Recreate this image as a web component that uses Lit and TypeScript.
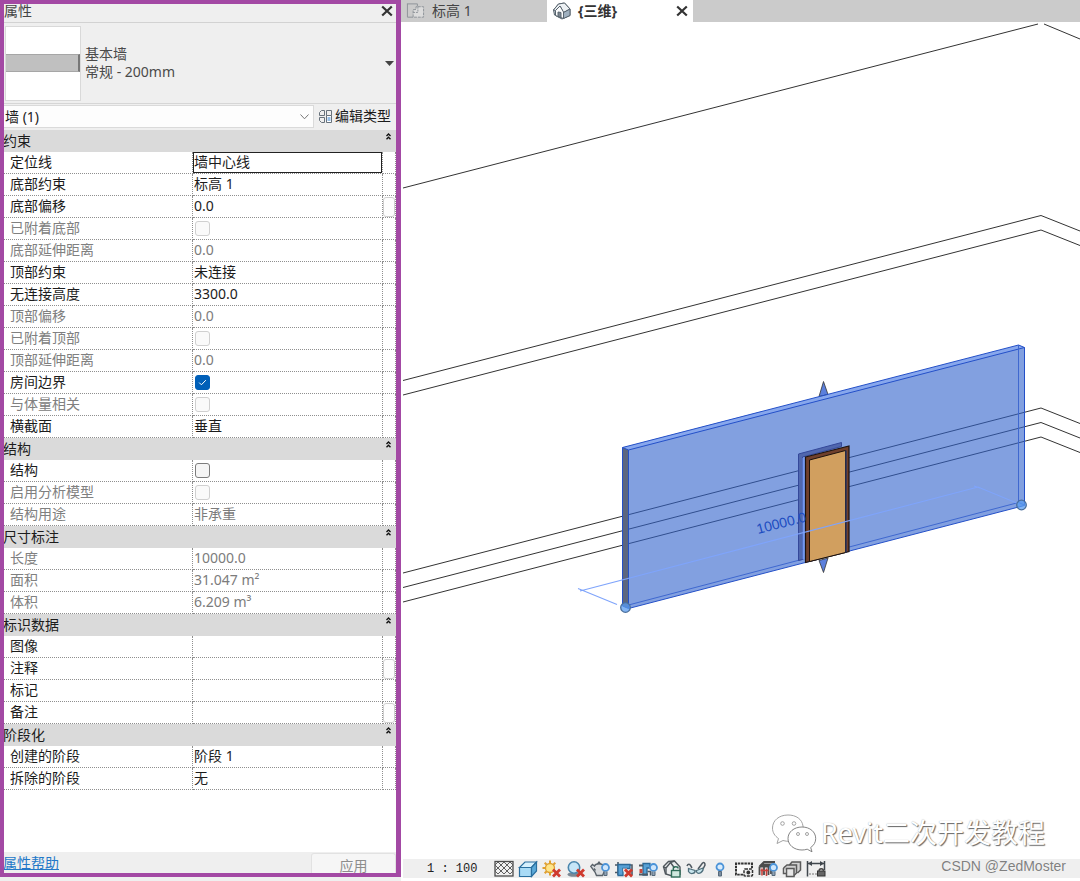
import { LitElement, html, svg, css, nothing, TemplateResult } from "lit";
import { customElement } from "lit/decorators.js";
import { classMap } from "lit/directives/class-map.js";

interface Row {
  label: string;
  value?: string;
  check?: boolean;
  muted?: boolean;
  active?: boolean;
  more?: boolean;
}

interface Section {
  title: string;
  rows: Row[];
}

const SECTIONS: Section[] = [
  {
    title: "约束",
    rows: [
      { label: "定位线", value: "墙中心线", active: true },
      { label: "底部约束", value: "标高 1" },
      { label: "底部偏移", value: "0.0", more: true },
      { label: "已附着底部", check: false, muted: true },
      { label: "底部延伸距离", value: "0.0", muted: true },
      { label: "顶部约束", value: "未连接" },
      { label: "无连接高度", value: "3300.0" },
      { label: "顶部偏移", value: "0.0", muted: true },
      { label: "已附着顶部", check: false, muted: true },
      { label: "顶部延伸距离", value: "0.0", muted: true },
      { label: "房间边界", check: true },
      { label: "与体量相关", check: false, muted: true },
      { label: "横截面", value: "垂直" },
    ],
  },
  {
    title: "结构",
    rows: [
      { label: "结构", check: false },
      { label: "启用分析模型", check: false, muted: true },
      { label: "结构用途", value: "非承重", muted: true },
    ],
  },
  {
    title: "尺寸标注",
    rows: [
      { label: "长度", value: "10000.0", muted: true },
      { label: "面积", value: "31.047 m²", muted: true },
      { label: "体积", value: "6.209 m³", muted: true },
    ],
  },
  {
    title: "标识数据",
    rows: [
      { label: "图像", value: "" },
      { label: "注释", value: "", more: true },
      { label: "标记", value: "" },
      { label: "备注", value: "", more: true },
    ],
  },
  {
    title: "阶段化",
    rows: [
      { label: "创建的阶段", value: "阶段 1" },
      { label: "拆除的阶段", value: "无" },
    ],
  },
];

const closeIcon = html`<svg width="12" height="12" viewBox="0 0 12 12" aria-hidden="true">
  <path d="M1.2 1.500 10.800 10.500M10.800 1.500 1.200 10.500" stroke="#333" stroke-width="2.200" fill="none" />
</svg>`;

@customElement("properties-panel")
export class PropertiesPanel extends LitElement {
  static styles = css`
    :host {
      position: relative;
      display: flex;
      flex-direction: column;
      box-sizing: border-box;
      padding: 4px 5px 4px 2px;
      background: #efefef;
      color: #1c1c1c;
      font: 14px/18px "Noto Sans", "Noto Sans CJK SC", sans-serif;
    }
    :host::after {
      content: "";
      position: absolute;
      inset: 0;
      border: 4px solid #a349a4;
      border-right-width: 5px;
      pointer-events: none;
    }
    * {
      box-sizing: border-box;
    }
    button,
    input,
    select {
      font: inherit;
      color: inherit;
      margin: 0;
    }
    button {
      border: 0;
      padding: 0;
      background: none;
    }
    svg {
      display: block;
    }
    .title {
      display: flex;
      justify-content: space-between;
      align-items: center;
      height: 19px;
      padding: 0 3px 4px 2px;
      border-bottom: 1px solid #d2d2d2;
      color: #444;
    }
    h2 {
      margin: 0;
      font: inherit;
    }
    .type {
      display: flex;
      align-items: center;
      gap: 4px;
      height: 81px;
      padding: 0 2px 0 3px;
      border-bottom: 1px solid #d6d6d6;
      color: #4a4a4a;
      text-align: left;
    }
    .thumb {
      flex: none;
      width: 76px;
      height: 75px;
      border: 1px solid #d9d9d9;
      background: #fff;
      display: flex;
      align-items: center;
    }
    .thumb span {
      flex: 1;
      height: 18px;
      background: #c0c0c0;
      border: 1px solid #a6a6a6;
      border-right: 2px solid #777;
      border-left: 0;
    }
    .name {
      flex: 1;
      display: flex;
      flex-direction: column;
    }
    .filter {
      display: flex;
      height: 26px;
      padding-top: 1px;
    }
    .pick {
      position: relative;
      flex: 1;
      display: flex;
      margin-bottom: 2px;
    }
    .pick select {
      flex: 1;
      appearance: none;
      border: 1px solid #dadada;
      border-radius: 0;
      background: #fdfdfd;
      padding: 0 20px 0 2px;
    }
    .pick svg {
      position: absolute;
      right: 5px;
      top: 9px;
      pointer-events: none;
    }
    .edit {
      display: flex;
      align-items: center;
      gap: 3px;
      padding: 0 5px 3px;
    }
    .grid {
      flex: 1;
      background: #fff;
    }
    table {
      width: 100%;
      table-layout: fixed;
      border-spacing: 0;
    }
    .c-label {
      width: 191px;
    }
    .c-more {
      width: 13px;
    }
    th,
    td {
      height: 22px;
      padding: 0;
      font-weight: 400;
      text-align: left;
      border-bottom: 1px dotted #8f8f8f;
      line-height: 18px;
    }
    td,
    th[scope="row"] {
      border-right: 1px dotted #8f8f8f;
    }
    .head th {
      background: #dadada;
      border-bottom-color: #dadada;
    }
    .bar {
      display: flex;
      justify-content: space-between;
      height: 21px;
      padding-left: 1px;
      line-height: 22px;
    }
    .fold {
      width: 15px;
      height: 13px;
      display: grid;
      place-items: center;
    }
    label {
      display: block;
      padding: 0 0 2px 8px;
    }
    .muted {
      color: #808080;
    }
    .text {
      display: block;
      width: 100%;
      height: 21px;
      padding: 0 0 3px;
      border: 1px solid transparent;
      border-radius: 0;
      background: none;
      outline: 0;
    }
    .active .text {
      border-color: #222;
    }
    .text:disabled {
      color: #7c7c7c;
      opacity: 1;
    }
    .box {
      appearance: none;
      display: block;
      width: 15px;
      height: 15px;
      margin-left: 2px;
      border: 1px solid #7c7c7c;
      border-radius: 3px;
      background: #f5f5f5;
    }
    .box:disabled {
      border-color: #d0d0d0;
      background: #fafafa;
    }
    .box:checked {
      border-color: #005fb8;
      background: #005fb8
        url('data:image/svg+xml,<svg xmlns="http://www.w3.org/2000/svg" viewBox="0 0 13 13"><path d="M3.2 6.6 5.4 8.8 9.8 4.2" fill="none" stroke="white" stroke-width="1"/></svg>');
    }
    .more {
      display: block;
      width: 12px;
      height: 20px;
      border: 1px solid #cfcfcf;
      border-radius: 3px;
      background: #fdfdfd;
    }
    .foot {
      display: flex;
      justify-content: space-between;
      align-items: flex-start;
      height: 21px;
      padding-left: 1px;
    }
    .foot a {
      color: #2378c8;
      line-height: 22px;
    }
    .apply {
      width: 85px;
      height: 20px;
      margin-top: 1px;
      padding-top: 3px;
      border: 1px solid #e2e2e2;
      border-bottom: 0;
      border-radius: 3px 3px 0 0;
      background: #f6f6f6;
      color: #8d8d8d;
    }
  `;

  private row(row: Row, id: string): TemplateResult {
    return html`<tr class=${classMap({ muted: !!row.muted, active: !!row.active })}>
      <th scope="row"><label for=${id}>${row.label}</label></th>
      <td>
        ${row.check === undefined
          ? html`<input class="text" id=${id} type="text" .value=${row.value ?? ""} ?disabled=${row.muted} />`
          : html`<input class="box" id=${id} type="checkbox" ?checked=${row.check} ?disabled=${row.muted} />`}
      </td>
      <td>${row.more ? html`<button class="more" aria-label=${row.label}></button>` : nothing}</td>
    </tr>`;
  }

  render() {
    return html`
      <div class="title">
        <h2>属性</h2>
        <button aria-label="关闭">${closeIcon}</button>
      </div>
      <button class="type">
        <span class="thumb"><span></span></span>
        <span class="name"><span>基本墙</span><span>常规 - 200mm</span></span>
        <svg width="9" height="5" viewBox="0 0 9 5"><path d="M0 0h9L4.500 5z" fill="#444" /></svg>
      </button>
      <div class="filter">
        <div class="pick">
          <select aria-label="类别">
            <option>墙 (1)</option>
          </select>
          <svg width="9" height="6" viewBox="0 0 9 6">
            <path d="M.5 .5 4.500 4.800 8.500 .5" fill="none" stroke="#777" />
          </svg>
        </div>
        <button class="edit">
          <svg width="13" height="13" viewBox="0 0 13 13" fill="none" stroke="#68727c">
            <path d="M2.500 .5h3v5h-5v-3zM7.500 .5h5v5h-5zM.5 7.500h5v5h-3l-2-2z" />
            <path d="M7.500 5.500h5v7h-5z" fill="#fff" />
            <path d="M8.500 8h3M8.500 10h3" stroke="#2f7fd0" />
          </svg>
          编辑类型
        </button>
      </div>
      <div class="grid">
        <table>
          <colgroup>
            <col class="c-label" />
            <col />
            <col class="c-more" />
          </colgroup>
          ${SECTIONS.map(
            (s, i) => html`<tbody>
              <tr class="head">
                <th colspan="3" scope="rowgroup">
                  <div class="bar">
                    <span>${s.title}</span>
                    <button class="fold" aria-label="折叠">
                      <svg width="5" height="7" viewBox="0 0 5 7">
                        <path d="M.5 3 2.500 1 4.500 3M.5 6.300 2.500 4.300 4.500 6.300" fill="none" stroke="#111" stroke-width="1.400" />
                      </svg>
                    </button>
                  </div>
                </th>
              </tr>
              ${s.rows.map((r, j) => this.row(r, `p${i}-${j}`))}
            </tbody>`
          )}
        </table>
      </div>
      <div class="foot">
        <a href="#help">属性帮助</a>
        <button class="apply" disabled>应用</button>
      </div>
    `;
  }
}

const redCross = svg`<path d="M11 9.500l7 7M18 9.500l-7 7" stroke="#cf3a2e" stroke-width="2.800" fill="none"/>`;
const bulb = svg`<circle cx="15.500" cy="7.500" r="3.500" fill="#cfe6fb" stroke="#4b93d8" stroke-width="1.800"/><path d="M14 11.500v4h3v-4" fill="#8fa2b4" stroke="#56697b"/>`;

const VIEW_TOOLS: { name: string; art: TemplateResult }[] = [
  {
    name: "详细程度",
    art: svg`<rect x="1" y="1.500" width="18" height="14.500" fill="#f0f0f0" stroke="#4c4c4c" stroke-width="1.300"/>
      <path d="M1 5 4 2l3 3 3-3 3 3 3-3 3 3M1 5l3 3 3-3 3 3 3-3 3 3 3-3M1 11l3-3 3 3 3-3 3 3 3-3 3 3M1 11l3 3 3-3 3 3 3-3 3 3 3-3" fill="none" stroke="#5f5f5f" stroke-width="1"/>`,
  },
  {
    name: "视觉样式",
    art: svg`<path d="M1.500 7.500 7 2h11.500l-5 5.500z" fill="#d6f0fd" stroke="#2a6f9f" stroke-width="1.200"/>
      <path d="M1.500 7.500h12v9h-12z" fill="#a9dbf6" stroke="#2a6f9f" stroke-width="1.200"/><path d="M13.500 7.500l5-5.500v9l-5 5.500z" fill="#5ba9d8" stroke="#2a6f9f" stroke-width="1.200"/>`,
  },
  {
    name: "日光路径",
    art: svg`<path d="M8 .5v3M8 12.500v3M.5 8h3M2.700 2.700l2 2M13.300 2.700l-2 2M2.700 13.300l2-2" stroke="#e0a030" stroke-width="2"/>
      <circle cx="8" cy="8" r="4.500" fill="#ffe58a" stroke="#dda030" stroke-width="1.300"/>${redCross}`,
  },
  {
    name: "阴影",
    art: svg`<ellipse cx="8" cy="14.500" rx="6.500" ry="2.300" fill="#7c8995"/><circle cx="8" cy="7.500" r="5.700" fill="#c6e6f8" stroke="#4a86ad" stroke-width="1.600"/>${redCross}`,
  },
  {
    name: "渲染",
    art: svg`<path d="M4.500 6c1-3 8-3 9 0l1.500 4-2.500 5.500H6.500L5 12 .8 6.500 2.500 4.500z" fill="#d9dcdf" stroke="#59626a" stroke-width="1.400"/>
      <path d="M4 8.500l1.500 2M7.500 4 9 2l1.500 2" fill="none" stroke="#59626a" stroke-width="1.300"/>${bulb}`,
  },
  {
    name: "裁剪视图",
    art: svg`<path d="M1 5h17v10M4 2v13M1 12.500h8" fill="none" stroke="#4e5a66" stroke-width="1.600"/>
      <path d="M4 4.500h12v4H9v7H4z" fill="#58a2d6" stroke="#2c6a99" stroke-width="1.300"/><path d="M9 8.500h4v3H9z" fill="#f3d6d3"/>${redCross}`,
  },
  {
    name: "裁剪区域",
    art: svg`<path d="M5 3.500h7v4.500H9v7H5z" fill="#58a2d6" stroke="#2c6a99" stroke-width="1.300"/><path d="M1 5.500h4M1 14.500h9" stroke="#4e5a66" stroke-width="1.800"/>
      <path d="M1.500 9h3v4h-3z" fill="#c8493d"/><path d="M9.500 11.500h3v4" fill="none" stroke="#4e5a66" stroke-width="1.500"/>${bulb}`,
  },
  {
    name: "锁定的三维视图",
    art: svg`<path d="M1.500 6.500 6.500 1.500l6-.5 5.500 6v7.500l-6 2L3.500 14z" fill="#eceeef" stroke="#4f565c" stroke-width="1.400"/>
      <path d="M1 7l3 .8V14M4 8l4.500-5.500L12.500 8M12.500 1 8.500 2.500" fill="none" stroke="#4f565c" stroke-width="1.400"/>
      <rect x="9.500" y="10.500" width="8.500" height="6.500" fill="#cfe8de" stroke="#2f6d59" stroke-width="1.400"/><path d="M11.300 10.500V8.500c0-2.300 4.800-2.300 4.800 0" fill="none" stroke="#2f6d59" stroke-width="1.400"/>`,
  },
  {
    name: "临时隐藏",
    art: svg`<path d="M1 6c1-2.500 3-2 3.500-.5L6 8M12 9l4.500-6c1.500-1 2.500 0 2.500 2l-2 4" fill="none" stroke="#4f5961" stroke-width="1.500"/>
      <path d="M2.500 8.500 9 10.500c.5 3-4.500 4.500-6.500 1zM10.500 10.500 17 8c1 4-4.500 7-6.500 4z" fill="#c9e6ee" stroke="#4f6f7c" stroke-width="1.300"/>`,
  },
  {
    name: "显示隐藏的图元",
    art: svg`<circle cx="10" cy="7" r="3.500" fill="#d9ecfc" stroke="#4b93d8" stroke-width="1.800"/><path d="M8.500 11.500h3v4.500h-3z" fill="#7b8d9e" stroke="#56697b"/>`,
  },
  {
    name: "临时视图属性",
    art: svg`<path d="M9 14.500H2v-11h16v4.500" fill="none" stroke="#333" stroke-width="2" stroke-dasharray="2.500 .8"/>
      <path d="M3 5h13.500v4L10 13.500H3z" fill="#fafafa"/><rect x="10" y="9" width="8.500" height="7" rx="1" fill="#eee" stroke="#333" stroke-width="1.500" stroke-dasharray="3 1"/><circle cx="14.300" cy="12.500" r="1.900" fill="#333"/>`,
  },
  {
    name: "分析模型",
    art: svg`<path d="M1.500 6.500 6 2h11M1.500 6.500h11M3.500 4.500h11M1.500 6.500V15M6 6.500V15M10.500 6.500V15M13 5v9" fill="none" stroke="#4b4b4b" stroke-width="1.800"/>
      <path d="M2.500 10.500h8M4 8.500v7M8.500 8.500V16" stroke="#c8403a" stroke-width="1.600"/>${bulb}`,
  },
  {
    name: "位移集",
    art: svg`<path d="M7 5.500 10 2h8.500v8L15.500 13M1.500 8 5 5h9.500v8L11 16.500" fill="#d2d2d2" stroke="#5a5a5a" stroke-width="1.500"/>
      <rect x="4.500" y="8.500" width="7.500" height="8" fill="#e6e6e6" stroke="#5a5a5a" stroke-width="1.500"/><path d="M1.500 8v5.500h3" fill="none" stroke="#5a5a5a" stroke-width="1.500"/>`,
  },
  {
    name: "约束",
    art: svg`<path d="M1.500 1v15.500M18.500 1v9M2 3.500h16" fill="none" stroke="#3f464c" stroke-width="1.500"/>
      <path d="M2 3.500l4-2.500v5zM18 3.500l-4-2.500v5z" fill="#3f464c"/><path d="M3 14h8" stroke="#777" stroke-dasharray="2 1"/>
      <rect x="11.500" y="11" width="7.500" height="5" fill="#666" stroke="#333"/><path d="M13 11c0-3 4.500-3 4.500 0" fill="none" stroke="#444" stroke-width="1.400"/>`,
  },
];

@customElement("model-view")
export class ModelView extends LitElement {
  static styles = css`
    :host {
      position: relative;
      display: flex;
      flex-direction: column;
      min-width: 0;
      background: #fff;
      color: #444;
      font: 14px/20px "Noto Sans", "Noto Sans CJK SC", sans-serif;
    }
    * {
      box-sizing: border-box;
    }
    button {
      font: inherit;
      color: inherit;
      margin: 0;
      border: 0;
      padding: 0;
      background: none;
    }
    svg {
      display: block;
      flex: none;
    }
    .tabs {
      display: flex;
      height: 22px;
      background: #cbcbcb;
    }
    .tab {
      display: flex;
      align-items: center;
      width: 146px;
      padding: 0 5px;
    }
    .tab > button:first-child {
      flex: 1;
      display: flex;
      align-items: center;
      gap: 7px;
      padding-bottom: 1px;
    }
    .current {
      background: #fff;
      font-weight: 700;
      color: #333;
    }
    .scene {
      flex: 1;
      min-height: 0;
      width: 100%;
    }
    .dim {
      font: 14px "Liberation Sans", sans-serif;
      fill: #1c4cc0;
    }
    .status {
      display: flex;
      align-items: center;
      height: 19px;
      margin: 0 0 3px 2px;
      padding-left: 24px;
      background: #efefef;
    }
    .scale {
      width: 65px;
      font: 12px/18px "Liberation Mono", monospace;
      color: #222;
      text-align: left;
    }
    .tool {
      width: 24px;
      height: 18px;
      display: grid;
      place-items: center;
    }
    .brand {
      position: absolute;
      right: 35px;
      bottom: 28px;
      display: flex;
      align-items: center;
      gap: 4px;
      font-size: 27px;
      line-height: 38px;
      color: #fff;
      text-shadow: 1px 1px 1px #666, 0 0 1px #aaa;
    }
    .credit {
      position: absolute;
      right: 14px;
      bottom: 5px;
      color: #808080;
      font: 14px/20px "Liberation Sans", sans-serif;
      text-shadow: 0 0 1px #fff;
    }
  `;

  render() {
    return html`
      <div class="tabs">
        <div class="tab">
          <button>
            <svg width="19" height="18" viewBox="0 0 20 18" fill="none" stroke="#8d9298">
              <path d="M1 1.500h11v3M1.500 1.500v14h6" />
              <path d="M7.500 15.500v-8h3v-3h8v11z" fill="#dcdcdc" stroke-dasharray="3 1" />
              <path d="M12.500 4.500v6h-5" stroke-dasharray="2 1" />
            </svg>
            标高 1
          </button>
        </div>
        <div class="tab current">
          <button>
            <svg width="19" height="18" viewBox="0 0 18 18" stroke="#58646e" stroke-linejoin="round">
              <path d="M1 8 6 2l6-1 5.500 6v6.500l-8 3.500L2 13z" fill="#c3ccd4" />
              <path d="M6 2 1 8l2 .5L7.500 4l3.500 6.500 6.500-3.500L12 1z" fill="#edf1f4" />
              <path d="M11 10.500 17.500 7v6.500L11 16.500z" fill="#9fb0bf" />
              <path d="M3 8.500 7.500 4l3.500 6v6.500L3 13.500z" fill="#fafbfc" />
              <path d="M5.500 10v4.500l3 1v-5z" fill="#7c8791" />
            </svg>
            {三维}
          </button>
          <button aria-label="关闭">${closeIcon}</button>
        </div>
      </div>
      <svg class="scene" viewBox="401 22 679 837" preserveAspectRatio="xMinYMin meet" role="img" aria-label="三维视图">
        <g fill="none" stroke="#333" stroke-width="1">
          <path d="M403 188 1038 24M1044 24 1080 39" />
          <path d="M403 380.500 1041 215.500 1080 231" />
          <path d="M403 395 1041 230 1080 245.500" />
          <path d="M403 573 1041 408 1080 423.500" />
          <path d="M403 587.500 1041 422.500 1080 438" />
          <path d="M403 602 1041 437 1080 452.500" />
        </g>
        <path d="M823.500 381.500 819 396.500 828 394.500z" stroke="#333" stroke-width=".8" fill="#5b7fdc" />
        <path d="M622.500 447.500 1018.500 345 1024.500 347.500V505.500L628.500 608.500 622.500 606z" fill="#2f60cc" fill-opacity=".6" />
        <path d="M622.500 447.500 1018.500 345 1024.500 347.500 628.500 450z" fill="#8aabf5" fill-opacity=".6" />
        <path d="M622.500 447.500 628.500 450V608.500L622.500 606z" fill="#5c667f" />
        <g fill="none" stroke="#2450c8" stroke-width="1">
          <path d="M622.500 447.500 1018.500 345 1024.500 347.500V505.500L628.500 608.500 622.500 606z" />
          <path d="M622.500 447.500 628.500 450 1024.500 347.500M628.500 450V608" />
          <path d="M1018.500 345V502.500M628.500 605 1018.500 502.500 1024.500 505" stroke="#3f68cf" />
        </g>
        <path d="M798.500 454 841.500 442.500V446.500L802.500 457V559.500L798.500 560.500z" fill="#5067ae" stroke="#34489a" />
        <path d="M802.500 458 806 457V559H802.500z" fill="#7398ee" />
        <path d="M805.500 457 849 446V551.500L845.500 552.500 809.500 561.500 805.500 562.500z" fill="#70402c" stroke="#1d120e" stroke-width="1.200" />
        <path d="M809.500 460 845.500 450.500V552.500L809.500 561.500z" fill="#d19f5f" stroke="#1d120e" />
        <path d="M846 450.500V552.500" stroke="#28345f" stroke-width="1.400" />
        <path d="M819 560.500 828 558 823.500 572.500z" fill="#5b7fdc" stroke="#333" stroke-width=".8" />
        <path d="M617 604.500 578 588.500M580 591 978 487 1018 503.500M974 486l6 2" fill="none" stroke="#7fa4fb" stroke-width="1.100" />
        <text class="dim" transform="translate(758 534) rotate(-14.500)">10000.0</text>
        <g stroke="#4a6f9c" fill="#5a9cf0" fill-opacity=".75" stroke-width="1.300">
          <circle cx="625.500" cy="607.500" r="4.800" />
          <circle cx="1021.500" cy="505" r="4.800" />
        </g>
      </svg>
      <div class="status">
        <button class="scale">1 : 100</button>
        ${VIEW_TOOLS.map(
          (t) => html`<button class="tool" aria-label=${t.name}>
            <svg width="20" height="18" viewBox="0 0 20 18" fill="none">${t.art}</svg>
          </button>`
        )}
      </div>
      <div class="brand">
        <svg width="46" height="40" viewBox="0 0 46 40" fill="#fff" stroke="#999" stroke-width=".9">
          <path d="M17 2C8 2 1.500 7.500 1.500 15c0 4.500 2.300 8 6 10.500L6 30.500l6-3c2 .6 4.500 1 7 .8C32 27 33 20 32 13 31 6 25 2 17 2z" />
          <path d="M31 14c-8 0-14 5-14 11.500S23 37 31 37c2 0 3.500-.3 5.200-.8l4.800 2.600-1.300-4.300c3.300-2.300 5-5.200 5-9C44.700 19 39 14 31 14z" stroke="#777" />
          <circle cx="11.500" cy="10.500" r="1.800" /><circle cx="23" cy="10.500" r="1.800" />
          <circle cx="27" cy="21" r="1.500" /><circle cx="36" cy="21" r="1.500" />
        </svg>
        <span>Revit二次开发教程</span>
      </div>
      <div class="credit">CSDN @ZedMoster</div>
    `;
  }
}

@customElement("app-root")
export class AppRoot extends LitElement {
  static styles = css`
    :host {
      display: grid;
      grid-template-columns: 401px minmax(0, 1fr);
      height: 100vh;
      background: #fff;
    }
    .side {
      display: grid;
      padding-bottom: 4px;
      background: #efefef;
    }
  `;

  render() {
    return html`
      <div class="side"><properties-panel></properties-panel></div>
      <model-view></model-view>
    `;
  }
}
